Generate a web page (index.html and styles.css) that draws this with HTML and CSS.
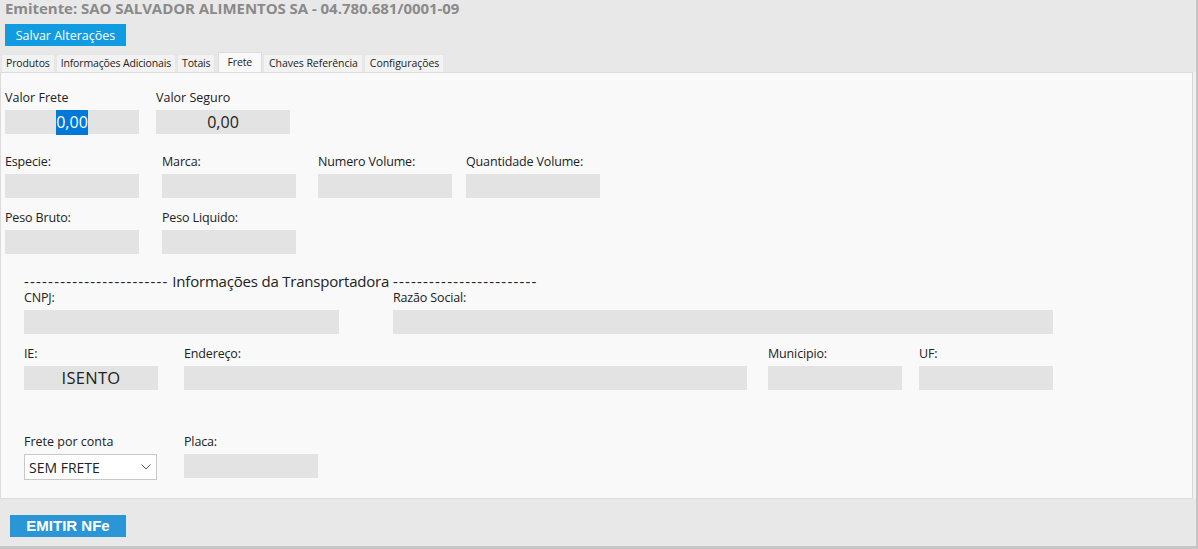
FILE: index.html
```html
<!DOCTYPE html>
<html lang="pt-BR">
  <head>
    <meta charset="UTF-8" />
    <meta name="viewport" content="width=device-width, initial-scale=1.0" />
    <title>NFe - Frete</title>
    <link rel="stylesheet" href="styles.css">
  </head>
  <body>
    <div class="window">
      <h1 class="emitente">Emitente: SAO SALVADOR ALIMENTOS SA - 04.780.681/0001-09</h1>
      <button class="btn-save">Salvar Alterações</button>

      <ul class="tabs">
        <li>Produtos</li>
        <li>Informações Adicionais</li>
        <li>Totais</li>
        <li class="active">Frete</li>
        <li class="wide">Chaves Referência</li>
        <li class="wide">Configurações</li>
      </ul>

      <div class="panel">
        <div class="row row-valores">
          <div class="field w151">
            <label class="lbl-lg">Valor Frete</label>
            <div class="input value"><span class="sel">0,00</span></div>
          </div>
          <div class="field">
            <label class="lbl-lg">Valor Seguro</label>
            <div class="input value">0,00</div>
          </div>
        </div>

        <div class="row row-volume">
          <div class="field w157">
            <label>Especie:</label>
            <div class="input"></div>
          </div>
          <div class="field w156">
            <label>Marca:</label>
            <div class="input"></div>
          </div>
          <div class="field w148">
            <label>Numero Volume:</label>
            <div class="input"></div>
          </div>
          <div class="field">
            <label>Quantidade Volume:</label>
            <div class="input"></div>
          </div>
        </div>

        <div class="row row-peso">
          <div class="field w157">
            <label>Peso Bruto:</label>
            <div class="input"></div>
          </div>
          <div class="field">
            <label>Peso Liquido:</label>
            <div class="input"></div>
          </div>
        </div>

        <div class="transp">
          <div class="transp-title"><span class="dashes">------------------------</span> Informações da Transportadora <span class="dashes">------------------------</span></div>

          <div class="row row-cnpj">
            <div class="field w369">
              <label>CNPJ:</label>
              <div class="input wide-cnpj"></div>
            </div>
            <div class="field">
              <label>Razão Social:</label>
              <div class="input wide-razao"></div>
            </div>
          </div>

          <div class="row row-ie">
            <div class="field w160">
              <label>IE:</label>
              <div class="input value">ISENTO</div>
            </div>
            <div class="field w584">
              <label>Endereço:</label>
              <div class="input wide-end"></div>
            </div>
            <div class="field w151">
              <label>Municipio:</label>
              <div class="input"></div>
            </div>
            <div class="field">
              <label>UF:</label>
              <div class="input"></div>
            </div>
          </div>

          <div class="row row-frete">
            <div class="field w160">
              <label class="lbl-lg">Frete por conta</label>
              <div class="select">
                <span>SEM FRETE</span>
                <svg width="10" height="6" viewBox="0 0 10 6"><path d="M0.5 0.5 L5 5 L9.5 0.5" fill="none" stroke="#555" stroke-width="1"/></svg>
              </div>
            </div>
            <div class="field">
              <label>Placa:</label>
              <div class="input"></div>
            </div>
          </div>
        </div>
      </div>

      <div class="footer">
        <button class="btn-emitir">EMITIR NFe</button>
      </div>
    </div>
  </body>
</html>
```

FILE: styles.css
```css
* {
  margin: 0;
  padding: 0;
  box-sizing: border-box;
}
body {
  background: #e8e8e8;
  font-family: "Open Sans", "Noto Sans", sans-serif;
  color: #222;
  overflow: hidden;
}
.window {
  width: 1198px;
  height: 549px;
  border-right: 2px solid #c4c4c4;
  border-bottom: 3px solid #c6c6c6;
}
.emitente {
  font-size: 15px;
  font-weight: 700;
  color: #8a8a8a;
  line-height: 17px;
  height: 19px;
  padding-left: 5px;
  letter-spacing: -0.05px;
}
.btn-save {
  display: block;
  margin: 5px 0 0 5px;
  height: 22px;
  width: 121px;
  border: none;
  background: #119be0;
  color: #fff;
  font-family: "Open Sans", sans-serif;
  font-size: 12.5px;
}

/* tabs */
.tabs {
  list-style: none;
  display: flex;
  align-items: flex-end;
  gap: 1px;
  margin-top: 6px;
  padding-left: 1px;
  height: 20px;
}
.tabs li {
  font-size: 10.5px;
  height: 18px;
  line-height: 17px;
  padding: 0 4px;
  background: #f2f2f2;
  border: 1px solid #e6e6e6;
  border-bottom: none;
  letter-spacing: -0.15px;
}
.tabs li.active {
  height: 20px;
  line-height: 18px;
  padding: 0 9px 0 8px;
  margin-left: 2px;
  background: #f9f9f9;
  border-color: #dcdcdc;
}
.tabs li.wide {
  padding: 0 4px 0 5px;
  letter-spacing: -0.05px;
}

/* panel */
.panel {
  width: 1193px;
  height: 427px;
  background: #f9f9f9;
  border: 1px solid #dcdcdc;
  border-right: 1px solid #d6d6d6;
  padding-left: 4px;
  box-shadow: 3px 0 0 #f1f1f1;
}
.row {
  display: flex;
}
.field label {
  display: block;
  font-size: 12.5px;
  line-height: 16px;
  height: 16px;
  margin-bottom: 4px;
  letter-spacing: -0.15px;
}
.field label.lbl-lg {
  letter-spacing: 0;
}
.input {
  width: 134px;
  height: 24px;
  background: #e3e3e3;
}
.input.value {
  font-size: 16px;
  line-height: 24px;
  text-align: center;
}
.sel {
  background: #0078d7;
  color: #fff;
  padding: 1px 0 2px;
}
.w151 { width: 151px; }
.w156 { width: 156px; }
.w157 { width: 157px; }
.w148 { width: 148px; }
.w160 { width: 160px; }
.w369 { width: 369px; }
.w584 { width: 584px; }
.wide-cnpj { width: 315px; }
.wide-razao { width: 660px; }
.wide-end { width: 563px; }
.row-ie .input.value {
  font-size: 16.5px;
  letter-spacing: 0.3px;
}

.row-valores { margin-top: 17px; }
.row-volume { margin-top: 20px; }
.row-peso { margin-top: 12px; }

/* transportadora */
.transp {
  padding-left: 19px;
}
.transp-title {
  font-size: 15px;
  line-height: 16px;
  margin-top: 19px;
  letter-spacing: -0.2px;
  white-space: nowrap;
}
.dashes {
  letter-spacing: 1.2px;
}
.row-cnpj { margin-top: 1px; }
.row-ie { margin-top: 12px; }
.row-frete { margin-top: 44px; }
.select {
  width: 133px;
  height: 26px;
  background: #fff;
  border: 1px solid #c8c8c8;
  display: flex;
  align-items: center;
  justify-content: space-between;
  padding: 0 5px 0 4px;
  font-size: 14px;
}

/* footer */
.footer {
  padding: 15px 0 0 10px;
}
.btn-emitir {
  width: 116px;
  height: 22px;
  border: none;
  background: #2a96d6;
  color: #fff;
  font-family: "Liberation Sans", Arial, sans-serif;
  font-weight: 700;
  font-size: 15px;
}
```
